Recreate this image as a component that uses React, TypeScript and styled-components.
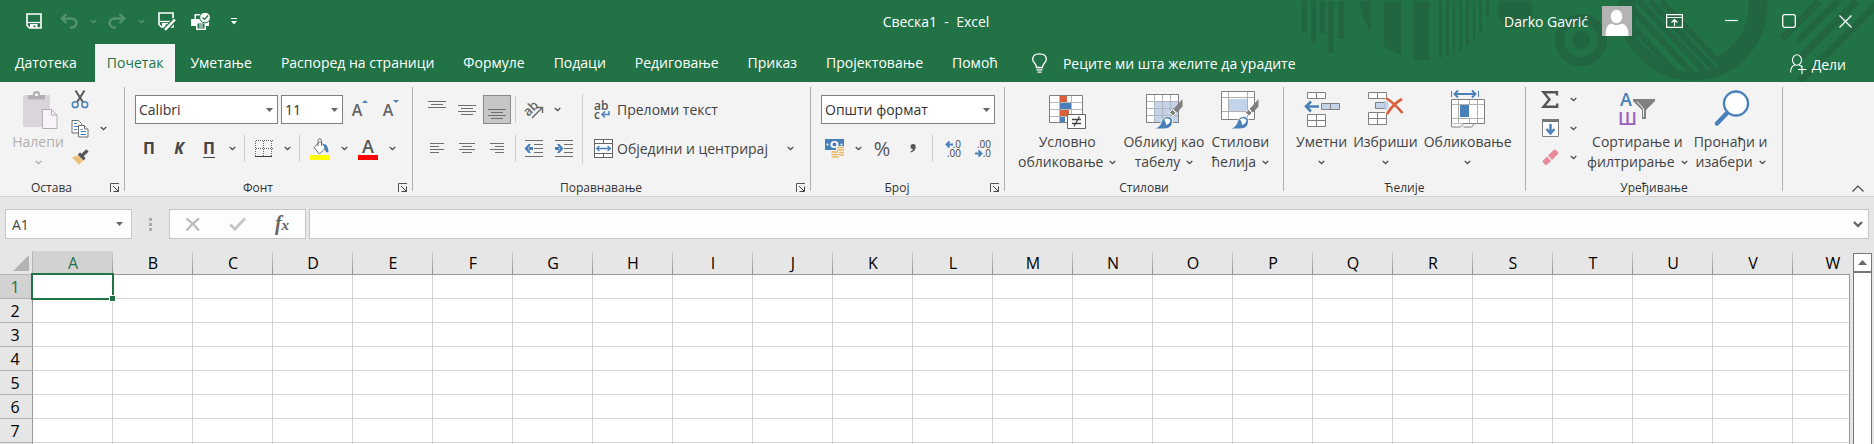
import React from 'react';
import styled, { createGlobalStyle, css } from 'styled-components';

const green = '#217346';
const line = '#6e6e6e';
const ink = '#444444';
const blue = '#4a80ba';
const paleBlue = '#c3d4ea';

const GlobalStyle = createGlobalStyle`
  *, *::before, *::after { box-sizing: border-box; }
  html, body, #root { height: 100%; }
  body {
    margin: 0;
    overflow: hidden;
    background: #e6e6e6;
    font-family: "Open Sans", "Noto Sans", sans-serif;
    font-size: 14px;
    color: ${ink};
  }
  svg { display: block; flex: none; overflow: visible; }
`;

/* ---------- shell ---------- */

const Window = styled.div`
  display: flex;
  flex-direction: column;
  height: 100%;
  overflow: hidden;
`;

const buttonReset = css`
  margin: 0;
  padding: 0;
  border: 0;
  background: none;
  font: inherit;
  color: inherit;
`;

const Header = styled.header`
  position: relative;
  flex: none;
  background: ${green};
  color: #fff;
`;

const HeaderArt = styled.svg`
  position: absolute;
  top: 0;
  right: 0;
  overflow: hidden;
`;

const TitleBar = styled.div`
  position: relative;
  display: grid;
  grid-template-columns: 1fr auto 1fr;
  align-items: center;
  height: 44px;
  padding-bottom: 2px;
`;

const QuickAccess = styled.div`
  display: flex;
  align-items: center;
  padding-left: 20px;
`;

const QuickButton = styled.button<{ $width: number }>`
  ${buttonReset}
  display: grid;
  place-items: center;
  width: ${(p) => p.$width}px;
  height: 28px;
  &:disabled { opacity: 0.22; color: #fff; }
`;

const Title = styled.h1`
  margin: 0;
  padding: 2px 2px 0 0;
  font-size: 14px;
  font-weight: 400;
  line-height: 20px;
  white-space: pre;
`;

const WindowArea = styled.div`
  display: flex;
  align-items: center;
  justify-content: flex-end;
`;

const Account = styled.button`
  ${buttonReset}
  display: flex;
  align-items: center;
  gap: 14px;
  margin-right: 14px;
  white-space: nowrap;
`;

const WindowButton = styled.button`
  ${buttonReset}
  display: grid;
  place-items: center;
  width: 57px;
  height: 32px;
`;

const TabBar = styled.nav`
  position: relative;
  display: flex;
  align-items: stretch;
  gap: 1px;
  height: 38px;
`;

const Tab = styled.button<{ $active?: boolean; $file?: boolean }>`
  ${buttonReset}
  padding: ${(p) => (p.$file ? '0 17px 0 15px' : p.$active ? '0 12px' : '0 14px')};
  line-height: 38px;
  white-space: nowrap;
  ${(p) => p.$active && css`background: #f3f3f3; color: ${green};`}
`;

const TellMe = styled.button`
  ${buttonReset}
  display: flex;
  align-items: center;
  gap: 16px;
  padding-left: 19px;
  white-space: nowrap;
`;

const Share = styled.button`
  ${buttonReset}
  display: flex;
  align-items: center;
  gap: 5px;
  margin-left: auto;
  padding: 2px 28px 0 0;
`;

/* ---------- ribbon ---------- */

const Ribbon = styled.section`
  display: flex;
  flex: none;
  align-items: flex-start;
  padding-top: 5px;
  background: #f3f3f3;
  border-bottom: 1px solid #d2d2d2;
`;

const RibbonGroup = styled.section<{ $width: number }>`
  display: flex;
  flex: none;
  flex-direction: column;
  width: ${(p) => p.$width}px;
  height: 109px;
`;

const GroupDivider = styled.div`
  flex: none;
  width: 1px;
  height: 104px;
  background: #b1b1b1;
`;

const GroupBody = styled.div<{ $pad?: number }>`
  display: flex;
  flex: 1;
  align-items: flex-start;
  padding: 0 ${(p) => p.$pad ?? 10}px;
`;

const GroupFooter = styled.footer`
  display: flex;
  align-items: center;
  height: 17px;
  color: #333;
`;

const GroupName = styled.h2`
  flex: 1;
  margin: 0;
  font-size: 12px;
  font-weight: 400;
  line-height: 16px;
  text-align: center;
`;

const Launcher = styled.button`
  ${buttonReset}
  width: 17px;
  margin-right: 4px;
  padding-left: 7px;
`;

const Stack = styled.div<{ $grow?: boolean }>`
  display: flex;
  flex-direction: column;
  flex: ${(p) => (p.$grow ? 1 : 'none')};
  gap: 10px;
  padding-top: 8px;
`;

const Row = styled.div`
  display: flex;
  align-items: center;
  gap: 2px;
  height: 29px;
`;

const SmallStack = styled.div`
  display: flex;
  flex-direction: column;
  gap: 5px;
`;

const SmallRow = styled.div`
  display: flex;
  gap: 2px;
  height: 24px;
`;

const IconButton = styled.button<{ $pressed?: boolean; $wide?: boolean }>`
  ${buttonReset}
  display: grid;
  place-items: center;
  width: ${(p) => (p.$wide ? 30 : 28)}px;
  height: 100%;
  ${(p) => p.$pressed && css`background: #c6c6c6; border: 1px solid #8a8a8a;`}
`;

const ArrowButton = styled.button`
  ${buttonReset}
  display: grid;
  place-items: center;
  width: 14px;
  height: 100%;
`;

const Letter = styled.span<{ $italic?: boolean; $underline?: boolean }>`
  font-size: 16px;
  font-weight: 700;
  line-height: 18px;
  font-style: ${(p) => (p.$italic ? 'italic' : 'normal')};
  border-bottom: 1px solid ${(p) => (p.$underline ? ink : 'transparent')};
`;

const ResizeLetter = styled.span`
  display: flex;
  align-items: flex-start;
  font-size: 16px;
  font-weight: 600;
  line-height: 20px;
  color: #666;
`;

const Percent = styled.span`
  font-size: 20px;
  line-height: 24px;
  color: #555;
`;

const ColorLetter = styled.span`
  width: 20px;
  border-bottom: 5px solid #ff0000;
  font-size: 18px;
  font-weight: 600;
  line-height: 17px;
  text-align: center;
  color: #555;
`;

const Decimal = styled.span`
  display: grid;
  justify-items: end;
  width: 18px;
  font-size: 10px;
  line-height: 9px;
`;

const DecimalLine = styled.span`
  display: flex;
  align-items: center;
`;

const RowDivider = styled.div<{ $space?: number }>`
  width: 1px;
  height: 27px;
  margin: 0 ${(p) => p.$space ?? 3}px;
  background: #cfcfcf;
`;

const TallDivider = styled.div`
  width: 1px;
  height: 70px;
  margin: 7px 6px 0 4px;
  background: #cfcfcf;
`;

const TextButton = styled.button`
  ${buttonReset}
  display: flex;
  align-items: center;
  height: 100%;
  white-space: nowrap;
`;

const IconSlot = styled.span`
  display: grid;
  place-items: center;
  width: 28px;
`;

const Push = styled.div`
  margin: 0 3px 0 auto;
`;

const SelectBox = styled.div<{ $width: number }>`
  display: grid;
  width: ${(p) => p.$width}px;
  height: 29px;
  & > * { grid-area: 1 / 1; }
  & > svg { place-self: center end; margin-right: 5px; pointer-events: none; }
  & + & { margin-left: 1px; }
`;

const Select = styled.select`
  width: 100%;
  height: 100%;
  padding: 0 16px 1px 3px;
  appearance: none;
  border: 1px solid #808080;
  border-radius: 0;
  background: #fff;
  font: inherit;
  color: #333;
`;

const LargeRow = styled.div<{ $gap: number }>`
  display: flex;
  align-items: flex-start;
  gap: ${(p) => p.$gap}px;
  padding-top: 3px;
`;

const LargeButton = styled.button<{ $width?: number }>`
  ${buttonReset}
  display: flex;
  flex-direction: column;
  align-items: center;
  width: ${(p) => (p.$width ? p.$width + 'px' : 'auto')};
  line-height: 20px;
  white-space: nowrap;
  & > svg { margin-bottom: 2px; }
  &:disabled { color: #b1b1b1; }
`;

const LargeLine = styled.span`
  display: flex;
  align-items: center;
  gap: 6px;
  height: 20px;
`;

const Collapse = styled.button`
  ${buttonReset}
  align-self: flex-end;
  margin-left: auto;
  padding: 4px 10px 4px 4px;
`;

/* ---------- formula bar ---------- */

const FormulaBar = styled.div`
  display: flex;
  flex: none;
  align-items: center;
  padding: 12px 5px;
`;

const NameBox = styled.div`
  display: flex;
  align-items: center;
  width: 127px;
  height: 30px;
  padding-right: 8px;
  background: #fdfdfd;
  border: 1px solid #c6c6c6;
`;

const NameInput = styled.input`
  flex: 1;
  min-width: 0;
  padding: 0 6px;
  border: 0;
  background: none;
  font: inherit;
  color: ${ink};
`;

const Grip = styled.div`
  display: grid;
  gap: 2px;
  margin: 0 17px;
  span { width: 3px; height: 3px; background: #ababab; }
`;

const EditButtons = styled.div`
  display: flex;
  align-items: center;
  justify-content: space-between;
  width: 137px;
  height: 30px;
  margin-right: 3px;
  padding: 0 14px;
  background: #fdfdfd;
  border: 1px solid #c6c6c6;
`;

const EditButton = styled.button`
  ${buttonReset}
  display: grid;
  place-items: center;
  width: 18px;
  height: 100%;
`;

const FxText = styled.span`
  font: italic 700 20px/22px "Liberation Serif", serif;
  color: #666;
  small { font-size: 15px; }
`;

const FormulaBox = styled.div`
  display: flex;
  flex: 1;
  align-items: center;
  height: 30px;
  padding-right: 5px;
  background: #fdfdfd;
  border: 1px solid #c6c6c6;
`;

/* ---------- sheet ---------- */

const SheetArea = styled.main`
  display: flex;
  flex: 1;
  min-height: 0;
`;

const Viewport = styled.div`
  flex: 1;
  min-width: 0;
  overflow: hidden;
`;

const Grid = styled.table`
  width: 1873px;
  table-layout: fixed;
  border-collapse: separate;
  border-spacing: 0;
`;

const Corner = styled.th`
  width: 33px;
  height: 24px;
  padding: 0;
  border-right: 1px solid #b5b5b5;
  border-bottom: 1px solid #b5b5b5;
  svg { margin-left: 13px; }
`;

const ColumnHead = styled.th<{ $selected: boolean }>`
  width: 80px;
  height: 24px;
  padding: 0;
  border-bottom: 1px solid #999;
  background: linear-gradient(#d0d0d0, #8f8f8f) right / 1px 100% no-repeat
    ${(p) => (p.$selected ? '#d2d2d2' : '#e6e6e6')};
  font-size: 16px;
  font-weight: 400;
  line-height: 22px;
  color: ${(p) => (p.$selected ? green : '#000')};
`;

const RowHead = styled.th<{ $selected: boolean }>`
  height: 24px;
  padding: 0 2px 0 0;
  border-right: 1px solid #999;
  border-bottom: 1px solid #b0b0b0;
  background: ${(p) => (p.$selected ? '#d2d2d2' : '#e6e6e6')};
  font-size: 16px;
  font-weight: 400;
  line-height: 22px;
  color: ${(p) => (p.$selected ? green : '#000')};
`;

const Cell = styled.td<{ $selected: boolean }>`
  padding: 0;
  background: #fff;
  border-right: 1px solid #d4d4d4;
  border-bottom: 1px solid #d4d4d4;
  ${(p) =>
    p.$selected &&
    css`
      position: relative;
      &::before {
        content: '';
        position: absolute;
        inset: -2px;
        border: 2px solid ${green};
      }
      &::after {
        content: '';
        position: absolute;
        right: -4px;
        bottom: -4px;
        width: 7px;
        height: 7px;
        background: ${green};
        border: 1px solid #fff;
      }
    `}
`;

const Gutter = styled.div`
  width: 4px;
  margin-top: 23px;
  border-left: 1px solid #999;
`;

const ScrollBar = styled.div`
  display: flex;
  flex-direction: column;
  width: 19px;
  margin: 2px 2px 0 0;
`;

const ScrollButton = styled.button`
  ${buttonReset}
  display: grid;
  place-items: center;
  height: 19px;
  background: #fff;
  border: 1px solid #777;
`;

const ScrollThumb = styled.div`
  flex: 1;
  background: #fff;
  border: 1px solid #777;
  border-bottom: 0;
`;

/* ---------- drawings ---------- */

const Chevron = ({ color = '#555' }: { color?: string }) => (
  <svg width="7" height="5" fill="none" stroke={color} strokeWidth="1.3"><path d="M.7 1l2.8 2.6L6.3 1" /></svg>
);

const Caret = () => <svg width="7" height="4"><path d="M0 0h7L3.5 4z" fill="#666" /></svg>;

const SaveShape = () => (
  <>
    <path d="M1 1h14v14H3.5L1 12.500z" fill="none" stroke="#fff" strokeWidth="1.6" />
    <path d="M1.500 9.500h13" stroke="#fff" strokeWidth="1.300" />
    <path d="M4 15v-4h7.500v4H9.500v-2.400H7.500V15z" fill="#fff" />
  </>
);

const Undo = ({ flip }: { flip?: boolean }) => (
  <svg width="18" height="16" fill="none" stroke="currentColor" strokeWidth="2.4">
    <g transform={flip ? 'matrix(-1 0 0 1 18 0)' : undefined}>
      <path d="M6.500 1L1.800 5.500l4.700 4.500M2.500 5.500H11c7.500 0 7.500 9.300-1 9.300" />
    </g>
  </svg>
);

const HLines = ({ rows, height = 18 }: { rows: number[][]; height?: number }) => (
  <svg width="18" height={height} fill="none" stroke={line} shapeRendering="crispEdges">
    <path d={rows.map(([x, y, w]) => `M${x} ${y + 0.5}h${w}`).join('')} />
  </svg>
);

const Scissors = () => (
  <svg width="18" height="19" fill="none">
    <path d="M4.500.500L12.500 13M13.500.500L5.500 13" stroke="#595959" strokeWidth="2" />
    <circle cx="4.200" cy="14.700" r="2.900" stroke={blue} strokeWidth="1.500" fill="#f3f3f3" />
    <circle cx="13.800" cy="14.700" r="2.900" stroke={blue} strokeWidth="1.500" fill="#f3f3f3" />
  </svg>
);

const Copy = () => (
  <svg width="18" height="19" fill="#fff" stroke={line}>
    <path d="M1 1.500h6.500l3 3V14H1z" />
    <path d="M7.500 6.500h6l3.500 3.500v8H7.500z" />
    <path d="M13.500 6.500V10H17" />
    <path d="M3 4.500h3M3 7.500h4M3 10.500h3M9.500 10.500h2M9.500 12.500h5.500M9.500 15.500h5.500" stroke={blue} />
  </svg>
);

const FormatPainter = () => (
  <svg width="18" height="16">
    <path d="M1 8.500l6-2 5 5-4 4.300z" fill="#edc078" />
    <path d="M6.800 5.800l2.300-2.200 5.600 5.600-2.200 2.300z" fill="#555" />
    <path d="M11 6.500l5.500-5" stroke="#555" strokeWidth="3.200" />
  </svg>
);

const PasteIcon = () => (
  <svg width="40" height="40" fill="none">
    <rect x="5" y="5" width="27" height="32" rx="1.500" fill="#d9d5da" />
    <path d="M10 9.500V5h5V3.500Q15 1 18.500 1T22 3.500V5h5v4.500z" fill="#b1b1b1" />
    <rect x="17" y="3.500" width="3" height="2.500" fill="#f3f3f3" />
    <path d="M24.500 19.500h9l5.500 5.500v13.500H24.500z" fill="#f7f3f9" stroke="#b1b1b1" />
    <path d="M33.500 19.500V25H39" stroke="#b1b1b1" />
  </svg>
);

const BorderIcon = () => (
  <svg width="18" height="18" stroke="#666" shapeRendering="crispEdges" fill="none">
    <path d="M.5 .5h17M.5 8.500h17M.5 .5v16M8.500 .5v16M16.500 .5v16" strokeDasharray="1 1" />
    <path d="M0 16.500h17" stroke="#444" />
  </svg>
);

const Bucket = () => (
  <svg width="20" height="22">
    <path d="M4 9.500l6-6 6 6-6.500 6.500z" fill="#fff" stroke={line} />
    <path d="M8 8V2.500Q8 .8 9.700.8T11.500 2.500V8" fill="none" stroke={line} />
    <path d="M13 6q5-1 5.500 8-2.500 1.500-3.500-2z" fill={blue} />
    <rect y="17" width="20" height="5" fill="#ffff00" />
  </svg>
);

const Orientation = () => (
  <svg width="20" height="20">
    <text x="0" y="13" transform="rotate(-45 7 10)" fontSize="13" fontWeight="600" fill="#666">ab</text>
    <path d="M8 18L18 8M13 7.500h5.500V13" fill="none" stroke="#666" strokeWidth="1.400" />
  </svg>
);

const WrapGlyph = styled.span`
  display: grid;
  width: 18px;
  font-size: 12px;
  font-weight: 600;
  line-height: 9px;
  color: #555;
`;

const WrapLine = styled.span`
  display: flex;
  align-items: center;
  gap: 1px;
`;

const WrapIcon = () => (
  <WrapGlyph>
    <WrapLine>ab</WrapLine>
    <WrapLine>
      c<svg width="9" height="7" fill="none" stroke={blue} strokeWidth="1.500"><path d="M8 0v3.500H1.500M4 .5l-3 3 3 3" /></svg>
    </WrapLine>
  </WrapGlyph>
);

const Indent = ({ out }: { out?: boolean }) => (
  <svg width="18" height="17">
    <path d="M0 .5h18M9 4.500h9M9 8.500h9M9 12.500h9M0 16.500h18" stroke={line} shapeRendering="crispEdges" />
    <g transform={out ? 'matrix(-1 0 0 1 8 0)' : undefined} fill={blue}>
      <path d="M0 7h4v3H0zM2 4h2.500L8.500 8.500 4.500 13H2l3-4.500z" />
    </g>
  </svg>
);

const MergeIcon = () => (
  <svg width="19" height="19" fill="#fff" stroke="#666" shapeRendering="crispEdges">
    <path d="M.5 .5h18v18H.5zM.5 4.500h18M.5 14.500h18M9.500 .5v4M9.500 14.500v4" />
    <path d="M3 9.500h13M5.500 7l-3 2.500 3 2.500M13.500 7l3 2.500-3 2.500" fill="none" stroke={blue} strokeWidth="1.300" shapeRendering="auto" />
  </svg>
);

const Money = () => (
  <svg width="20" height="19">
    <rect width="19" height="11" fill={blue} />
    <ellipse cx="9.500" cy="5.500" rx="4" ry="3.500" fill="#fff" />
    <circle cx="2.500" cy="5.500" r="1" fill="#fff" /><circle cx="16.500" cy="5.500" r="1" fill="#fff" />
    <circle cx="9.500" cy="5.500" r="2" fill={blue} />
    <path d="M11 7h8.500v11H15v1H6v-7h5z" fill="#f3f3f3" />
    <path d="M12 8.500h7M12 11h7M14 13.500h5M14 16h5M6.500 13h6.500M6.500 15.500h7M6.500 18h7" stroke="#e9b963" strokeWidth="1.700" />
  </svg>
);

const Comma = () => (
  <svg width="8" height="11"><path d="M4 1a2.700 2.700 0 0 1 2.700 3Q6.500 8 2 9.500L1.500 8.500Q4 7.200 4 6A2.500 2.500 0 1 1 4 1z" fill="#555" /></svg>
);

const TinyArrow = ({ left }: { left?: boolean }) => (
  <svg width="8" height="7" fill="none" stroke={blue} strokeWidth="1.800">
    <path d={left ? 'M8 3.500H1.500M4.500 .5l-3 3 3 3' : 'M0 3.500h6.500M3.500 .5l3 3-3 3'} />
  </svg>
);

const Brush = () => (
  <g>
    <path d="M38.500 9v7.500L33 22.500l-3.500-3.500z" fill="#808080" />
    <path d="M28.500 19.500l3.500 3.500-3 3-3.500-3.500z" fill="#808080" stroke="#f3f3f3" />
    <path d="M10 39q6-2 7.500-7.500 1.500-5 6-5 5.500 0 5 5.500-.5 7-8.500 7z" fill={blue} stroke="#f3f3f3" />
    <path d="M20 29.500q3.500-2.500 6.500.5-.5 4-4.500 5 0-3.500-2-5.500z" fill="#fff" />
  </g>
);

const ConditionalIcon = () => (
  <svg width="40" height="40">
    <path d="M2.500 5.500h33v27h-33z" fill="#fff" stroke="#808080" />
    <path d="M13 6h7v6h-7z" fill="#d9603b" /><path d="M13 13h11v6H13z" fill={blue} />
    <path d="M13 20h9v6h-9z" fill="#d9603b" /><path d="M13 27h5v5h-5z" fill={blue} />
    <path d="M3 12.500h32M3 19.500h32M3 26.500h32M12.500 6v26M24.500 6v26" stroke="#b8b8b8" />
    <path d="M20.500 24.500h18v14h-18z" fill="#fff" stroke="#666" />
    <path d="M25 29.500h9M25 33.500h9M32.500 26.500l-5.500 10" stroke="#444" strokeWidth="1.300" />
  </svg>
);

const TableStyleIcon = () => (
  <svg width="40" height="40">
    <path d="M2.500 4.500h32v28h-32z" fill="#fff" stroke="#808080" />
    <path d="M11 12h23v20H11z" fill={paleBlue} />
    <path d="M3 11.500h31M3 18.500h31M3 25.500h31M10.500 5v27M18.500 5v27M26.500 5v27" stroke="#b0b5bd" />
    <Brush />
  </svg>
);

const CellStyleIcon = () => (
  <svg width="40" height="40">
    <path d="M1.500 1.500h33v28h-33z" fill="#fff" stroke="#808080" />
    <path d="M2 7.500h32M2 21.500h32M8.500 2v27M27.500 2v27" stroke="#b0b0b0" />
    <path d="M9 9h18v12H9z" fill={paleBlue} />
    <Brush />
  </svg>
);

const BlockPair = ({ x, y, rows = 1 }: { x: number; y: number; rows?: number }) => (
  <path
    d={`M${x}.5 ${y}.5h18v${rows * 6}h-18zM${x + 9}.5 ${y}.5v${rows * 6}${rows > 1 ? `M${x}.5 ${y + 6}.5h18` : ''}`}
    fill="#fff" stroke="#808080"
  />
);

const InsertIcon = () => (
  <svg width="38" height="40">
    <BlockPair x={4} y={2} /><BlockPair x={4} y={24} rows={2} />
    <path d="M18.500 13.500h18v6h-18zM27.500 13.500v6" fill={paleBlue} stroke="#808080" />
    <path d="M16 16.500H3M8 11.500l-5 5 5 5" fill="none" stroke={blue} strokeWidth="2.500" />
  </svg>
);

const DeleteIcon = () => (
  <svg width="38" height="40">
    <BlockPair x={2} y={2} /><BlockPair x={2} y={22} rows={2} />
    <path d="M9.500 12.500h9.500v6H9.500z" fill={paleBlue} stroke="#808080" />
    <path d="M18.500 11h4v9h-4z" fill={paleBlue} />
    <path d="M20 8q8 5 16.500 15M36 9Q27 14 21 24" fill="none" stroke="#f3f3f3" strokeWidth="5" />
    <path d="M20 8q8 5 16.500 15M36 9Q27 14 21 24" fill="none" stroke="#d9603b" strokeWidth="2.600" />
  </svg>
);

const FormatIcon = () => (
  <svg width="38" height="40">
    <path d="M2.500 1v6M29.500 1v6" stroke={blue} />
    <path d="M5 4h22M9 .5L5.500 4 9 7.500M23 .5L26.500 4 23 7.500" fill="none" stroke={blue} strokeWidth="1.800" />
    <path d="M2.500 9.500h33v24h-33z" fill="#fff" stroke="#808080" />
    <path d="M3 14.500h32M3 28.500h32M9.500 10v23M20.500 10v5M20.500 28v5M28.500 10v23" stroke="#b0b0b0" />
    <path d="M11 15h9v12h-9z" fill={blue} />
    <path d="M2.500 33.500v3.500h9l3-3.500M14.500 37h8l3-3.500" fill="#fff" stroke="#808080" />
  </svg>
);

const Sigma = () => (
  <svg width="16" height="17"><path d="M15 4.500V1.200H1.500l6 7.300-6 7.300H15.200V12.500" fill="none" stroke="#555" strokeWidth="2.400" /></svg>
);

const FillIcon = () => (
  <svg width="17" height="18">
    <path d="M.5 1.500h16v16H.5z" fill="#fff" stroke="#808080" /><path d="M0 0h17v3H0z" fill="#777" />
    <path d="M8.500 5v9M4.500 10l4 4.500 4-4.500" fill="none" stroke={blue} strokeWidth="2.400" />
  </svg>
);

const Eraser = () => (
  <svg width="17" height="17">
    <path d="M6 6.500L12 .7Q13 0 14 1l2 2.200Q16.800 4 16 5l-6 6z" fill="#e98a9c" />
    <path d="M5 7.500L9 12l-3.800 3.500Q4 16.500 3 15.500L1 13.300Q.3 12.300 1.200 11.300z" fill="#e98a9c" />
  </svg>
);

const SortIcon = () => (
  <svg width="40" height="40">
    <text x="3" y="16" fontSize="18" fontWeight="600" fill={blue}>А</text>
    <text x="1" y="35" fontSize="18" fontWeight="600" fill="#9a62bf">Ш</text>
    <path d="M16 9h22v2l-9 9v9h-4v-9l-9-9z" fill="#808080" />
    <path d="M20 11.500l5 5.500 1.500 2v8" fill="none" stroke="#f3f3f3" />
  </svg>
);

const FindIcon = () => (
  <svg width="40" height="40">
    <path d="M6 33.500L17 22" stroke={blue} strokeWidth="4.500" strokeLinecap="round" />
    <circle cx="25" cy="13.500" r="12" fill="#fff" stroke={blue} strokeWidth="2.400" />
  </svg>
);

const LauncherIcon = () => (
  <svg width="10" height="9" fill="none" stroke="#555">
    <path d="M.5 9V.5H9" /><path d="M3 3l5 5M8.500 3.500v5h-5" stroke="#444" />
  </svg>
);

const Artwork = () => (
  <HeaderArt width="584" height="82" fill="#226541" aria-hidden="true">
    <path d="M12 1h5v32h-5zM21 1h5v42h-5zM30 1h5v32h-5zM38 1h6v52h-6zM48 1h6v38h-6z" />
    <path d="M70 1h11v31Q71 18 70 1zM94 1h17v54q-9-3-17-9zM123 1h16v59h-16z" />
    <path d="M149 1h3v57h-3zM156 1h3v55h-3zM163 1h2v53h-2zM169 1h3v50h-3zM176 1h3v45h-3zM183 1h2v39h-2zM189 1h3v32h-3zM196 1h3v16h-3z" />
    <path d="M210 1h31q3 8 1 13-4 15-17 15t-17-15q-1-6 2-13z" />
    <circle cx="291" cy="40" r="21.500" fill="none" stroke="#226541" strokeWidth="9" />
    <circle cx="291" cy="40" r="9" />
    <clipPath id="inside"><path d="M345 1h120v71H345z" /></clipPath>
    <clipPath id="bowl"><circle cx="403" cy="6" r="66" /></clipPath>
    <circle cx="403" cy="6" r="65" fill="none" stroke="#226541" strokeWidth="19" />
    <g clipPath="url(#bowl)">
      <path clipPath="url(#inside)" d="M346 1h30l62 66-20 10-40-8-32-30z" fill={green} />
      <g stroke="#226541" strokeWidth="6">
        <path d="M325 8l75 80M336 2l80 86M349 1l82 88M360 1l77 82M371 1l72 76" />
      </g>
    </g>
    <g stroke="#226541" strokeWidth="7">
      <path d="M529 1l-37 38M548 1l-40 40M567 1l-56 56M590 1l-80 80" />
    </g>
  </HeaderArt>
);

/* ---------- composed parts ---------- */

const Menu = ({ label }: { label: string }) => <ArrowButton aria-label={label}><Chevron /></ArrowButton>;

function Group({ name, width, launcher, pad, children }: {
  name: string; width: number; launcher?: boolean; pad?: number; children: React.ReactNode;
}) {
  return (
    <>
      <RibbonGroup $width={width}>
        <GroupBody $pad={pad}>{children}</GroupBody>
        <GroupFooter>
          <GroupName>{name}</GroupName>
          {launcher && <Launcher aria-label={name + ': подешавања'}><LauncherIcon /></Launcher>}
        </GroupFooter>
      </RibbonGroup>
      <GroupDivider />
    </>
  );
}

function Large({ icon, top, bottom }: { icon: React.ReactNode; top: string; bottom?: string }) {
  return (
    <LargeButton>
      {icon}
      <LargeLine>{top}</LargeLine>
      <LargeLine>{bottom}<Chevron /></LargeLine>
    </LargeButton>
  );
}

function Choice({ label, value, width }: { label: string; value: string; width: number }) {
  return (
    <SelectBox $width={width}>
      <Select aria-label={label} defaultValue={value}><option>{value}</option></Select>
      <Caret />
    </SelectBox>
  );
}

const tabs = ['Уметање', 'Распоред на страници', 'Формуле', 'Подаци', 'Редиговање', 'Приказ', 'Пројектовање', 'Помоћ'];
const columns = 'ABCDEFGHIJKLMNOPQRSTUVW'.split('');
const rows = [1, 2, 3, 4, 5, 6, 7, 8];

export default function App() {
  return (
    <Window>
      <GlobalStyle />
      <Header>
        <Artwork />
        <TitleBar>
          <QuickAccess>
            <QuickButton $width={28} aria-label="Сачувај"><svg width="16" height="16"><SaveShape /></svg></QuickButton>
            <QuickButton $width={42} disabled aria-label="Опозови"><Undo /></QuickButton>
            <QuickButton $width={6} disabled aria-label="Опозови: листа"><Chevron color="#fff" /></QuickButton>
            <QuickButton $width={42} disabled aria-label="Понови"><Undo flip /></QuickButton>
            <QuickButton $width={6} disabled aria-label="Понови: листа"><Chevron color="#fff" /></QuickButton>
            <QuickButton $width={46} aria-label="Сачувај као">
              <svg width="18" height="18">
                <SaveShape />
                <path d="M7.500 17.500L17 7.500" stroke={green} strokeWidth="5" />
                <path d="M7 17.800L17 7.500" stroke="#fff" strokeWidth="2.400" />
              </svg>
            </QuickButton>
            <QuickButton $width={22} aria-label="Преглед и штампање">
              <svg width="20" height="19">
                <path d="M0 7h3.500V2h7v5H18v7h-3v4H5v-4H0z" fill="#fff" />
                <path d="M5 3.500h5V7H5zM6.500 11.500h7v5h-7z" fill={green} />
                <path d="M8 13h4M8 15h4" stroke="#fff" />
                <circle cx="14" cy="5.500" r="5.300" fill="#fff" stroke={green} />
                <path d="M11.500 5.500l2 2 3.500-4" fill="none" stroke={green} strokeWidth="1.300" />
              </svg>
            </QuickButton>
            <QuickButton $width={44} aria-label="Прилагоди траку">
              <svg width="6" height="7" fill="#fff"><path d="M0 0h6v1H0zM0 3h6L3 6.500z" /></svg>
            </QuickButton>
          </QuickAccess>
          <Title>{'Свеска1  -  Excel'}</Title>
          <WindowArea>
            <Account>
              Darko Gavrić
              <svg width="30" height="30">
                <path d="M0 0h30v30H0z" fill="#b3b3b3" />
                <ellipse cx="14.500" cy="10.500" rx="5.800" ry="6.800" fill="#fff" />
                <path d="M3.500 30q0-12 6-12.500 5 3 10 0 7 .5 7 12.500z" fill="#fff" />
              </svg>
            </Account>
            <WindowButton aria-label="Опције приказа траке">
              <svg width="17" height="14" fill="none" stroke="#fff" strokeWidth="1.200">
                <path d="M.6.6h15.800v12.800H.6zM.6 3.500h15.800M8.500 12V6M5.500 8.500l3-3 3 3" />
              </svg>
            </WindowButton>
            <WindowButton aria-label="Умањи"><svg width="13" height="5"><path d="M0 1.500h13" stroke="#fff" strokeWidth="1.200" /></svg></WindowButton>
            <WindowButton aria-label="Увећај">
              <svg width="14" height="14"><rect x=".7" y=".7" width="12.600" height="12.600" rx="2" fill="none" stroke="#fff" strokeWidth="1.300" /></svg>
            </WindowButton>
            <WindowButton aria-label="Затвори"><svg width="13" height="13"><path d="M.5.5l12 12M12.500.5l-12 12" stroke="#fff" strokeWidth="1.300" /></svg></WindowButton>
          </WindowArea>
        </TitleBar>
        <TabBar>
          <Tab $file>Датотека</Tab>
          <Tab $active>Почетак</Tab>
          {tabs.map((t) => <Tab key={t}>{t}</Tab>)}
          <TellMe>
            <svg width="15" height="20" fill="none" stroke="#fff" strokeWidth="1.300">
              <path d="M4.500 14.500Q4.500 12 2.500 10 .7 8 .7 6.500.7.8 7.500.8t6.800 5.700q0 1.500-1.800 3.500-2 2-2 4.500zM4.500 16.800h6M5.500 19.200h4" />
            </svg>
            Реците ми шта желите да урадите
          </TellMe>
          <Share>
            <svg width="17" height="20" fill="none" stroke="#fff" strokeWidth="1.100">
              <ellipse cx="7" cy="6" rx="4.500" ry="5.200" /><path d="M.6 18.500Q.6 12 5 11M9 11q2 .6 3 2.500M8 15.500h8.500M12 11.500v8.500" />
            </svg>
            Дели
          </Share>
        </TabBar>
      </Header>

      <Ribbon>
        <Group name="Остава" width={124} launcher>
          <LargeRow $gap={0}>
            <LargeButton $width={56} disabled>
              <PasteIcon />
              <LargeLine>Налепи</LargeLine>
              <LargeLine><Chevron color="#b1b1b1" /></LargeLine>
            </LargeButton>
          </LargeRow>
          <SmallStack>
            <SmallRow><IconButton aria-label="Исеци"><Scissors /></IconButton></SmallRow>
            <SmallRow><IconButton aria-label="Копирај"><Copy /></IconButton><Menu label="Копирај: опције" /></SmallRow>
            <SmallRow><IconButton aria-label="Преносилац обликовања"><FormatPainter /></IconButton></SmallRow>
          </SmallStack>
        </Group>

        <Group name="Фонт" width={287} launcher>
          <Stack>
            <Row>
              <Choice label="Фонт" value="Calibri" width={143} />
              <Choice label="Величина фонта" value="11" width={62} />
              <IconButton $wide aria-label="Повећај фонт"><ResizeLetter>A<svg width="6" height="3"><path d="M0 3h6L3 0z" fill={blue} /></svg></ResizeLetter></IconButton>
              <IconButton aria-label="Смањи фонт"><ResizeLetter>A<svg width="6" height="3"><path d="M0 0h6L3 3z" fill={blue} /></svg></ResizeLetter></IconButton>
            </Row>
            <Row>
              <IconButton aria-label="Подебљано"><Letter>П</Letter></IconButton>
              <IconButton aria-label="Курзив"><Letter $italic>К</Letter></IconButton>
              <IconButton aria-label="Подвучено"><Letter $underline>П</Letter></IconButton>
              <Menu label="Подвучено: опције" />
              <RowDivider />
              <IconButton aria-label="Ивице"><BorderIcon /></IconButton>
              <Menu label="Ивице: опције" />
              <RowDivider />
              <IconButton $wide aria-label="Боја попуне"><Bucket /></IconButton>
              <Menu label="Боја попуне: опције" />
              <IconButton $wide aria-label="Боја фонта"><ColorLetter>A</ColorLetter></IconButton>
              <Menu label="Боја фонта: опције" />
            </Row>
          </Stack>
        </Group>

        <Group name="Поравнавање" width={397} launcher>
          <Stack>
            <Row>
              <IconButton aria-label="Поравнај по врху"><HLines rows={[[0, 0, 18], [3, 3, 12], [0, 6, 18]]} /></IconButton>
              <IconButton aria-label="Поравнај по средини"><HLines rows={[[0, 4, 18], [3, 7, 12], [0, 10, 18], [3, 13, 12]]} /></IconButton>
              <IconButton $pressed aria-label="Поравнај по дну"><HLines rows={[[0, 8, 18], [3, 11, 12], [0, 14, 18], [3, 17, 12]]} /></IconButton>
              <RowDivider $space={2} />
              <IconButton aria-label="Положај текста"><Orientation /></IconButton>
              <Menu label="Положај текста: опције" />
            </Row>
            <Row>
              <IconButton aria-label="Поравнај лево"><HLines height={11} rows={[[2, 0, 14], [2, 3, 9], [2, 6, 14], [2, 9, 9]]} /></IconButton>
              <IconButton aria-label="Центрирај"><HLines height={11} rows={[[1, 0, 16], [4, 3, 10], [1, 6, 16], [4, 9, 10]]} /></IconButton>
              <IconButton aria-label="Поравнај десно"><HLines height={11} rows={[[2, 0, 14], [7, 3, 9], [2, 6, 14], [7, 9, 9]]} /></IconButton>
              <RowDivider $space={2} />
              <IconButton aria-label="Смањи увлачење"><Indent out /></IconButton>
              <IconButton aria-label="Повећај увлачење"><Indent /></IconButton>
            </Row>
          </Stack>
          <TallDivider />
          <Stack $grow>
            <Row><TextButton><IconSlot><WrapIcon /></IconSlot>Преломи текст</TextButton></Row>
            <Row>
              <TextButton><IconSlot><MergeIcon /></IconSlot>Обједини и центрирај</TextButton>
              <Push><Menu label="Обједини: опције" /></Push>
            </Row>
          </Stack>
        </Group>

        <Group name="Број" width={193} launcher>
          <Stack>
            <Row><Choice label="Формат броја" value="Општи формат" width={174} /></Row>
            <Row>
              <IconButton aria-label="Новчани формат"><Money /></IconButton>
              <Menu label="Новчани формат: опције" />
              <IconButton $wide aria-label="Проценат"><Percent>%</Percent></IconButton>
              <IconButton aria-label="Стил зареза"><Comma /></IconButton>
              <RowDivider />
              <IconButton aria-label="Повећај децимале">
                <Decimal><DecimalLine><TinyArrow left />.0</DecimalLine><DecimalLine>.00</DecimalLine></Decimal>
              </IconButton>
              <IconButton aria-label="Смањи децимале">
                <Decimal><DecimalLine>.00</DecimalLine><DecimalLine><TinyArrow />.0</DecimalLine></Decimal>
              </IconButton>
            </Row>
          </Stack>
        </Group>

        <Group name="Стилови" width={278} pad={13}>
          <LargeRow $gap={7}>
            <Large icon={<ConditionalIcon />} top="Условно" bottom="обликовање" />
            <Large icon={<TableStyleIcon />} top="Обликуј као" bottom="табелу" />
            <Large icon={<CellStyleIcon />} top="Стилови" bottom="ћелија" />
          </LargeRow>
        </Group>

        <Group name="Ћелије" width={241} pad={12}>
          <LargeRow $gap={6}>
            <Large icon={<InsertIcon />} top="Уметни" />
            <Large icon={<DeleteIcon />} top="Избриши" />
            <Large icon={<FormatIcon />} top="Обликовање" />
          </LargeRow>
        </Group>

        <Group name="Уређивање" width={256}>
          <SmallStack>
            <SmallRow><IconButton aria-label="Збир"><Sigma /></IconButton><Menu label="Збир: опције" /></SmallRow>
            <SmallRow><IconButton aria-label="Попуни"><FillIcon /></IconButton><Menu label="Попуни: опције" /></SmallRow>
            <SmallRow><IconButton aria-label="Обриши"><Eraser /></IconButton><Menu label="Обриши: опције" /></SmallRow>
          </SmallStack>
          <RowDivider as="span" $space={3} hidden />
          <EditingTools>
            <LargeRow $gap={6}>
              <Large icon={<SortIcon />} top="Сортирање и" bottom="филтрирање" />
              <Large icon={<FindIcon />} top="Пронађи и" bottom="изабери" />
            </LargeRow>
          </EditingTools>
        </Group>
        <Collapse aria-label="Скупи траку">
          <svg width="12" height="7" fill="none" stroke="#444" strokeWidth="1.200"><path d="M.5 6.500L6 1l5.500 5.500" /></svg>
        </Collapse>
      </Ribbon>

      <FormulaBar>
        <NameBox><NameInput aria-label="Поље за име" defaultValue="A1" /><Caret /></NameBox>
        <Grip><span /><span /><span /></Grip>
        <EditButtons>
          <EditButton aria-label="Откажи"><svg width="16" height="15"><path d="M1.500 1.500q7 5 12.500 12M14 1.500q-7 5-12.500 12" fill="none" stroke="#bdbdbd" strokeWidth="2.200" /></svg></EditButton>
          <EditButton aria-label="Унеси"><svg width="17" height="14"><path d="M1 7.500l5 4.500L16 1.500" fill="none" stroke="#c6c6c6" strokeWidth="2.800" /></svg></EditButton>
          <EditButton aria-label="Уметни функцију"><FxText>f<small>x</small></FxText></EditButton>
        </EditButtons>
        <FormulaBox>
          <NameInput aria-label="Трака формуле" />
          <svg width="10" height="7"><path d="M1 1l4 4 4-4" fill="none" stroke="#666" strokeWidth="2.400" /></svg>
        </FormulaBox>
      </FormulaBar>

      <SheetArea>
        <Viewport>
          <Grid>
            <thead>
              <tr>
                <Corner aria-label="Изабери све"><svg width="16" height="16"><path d="M16 0v16H0z" fill="#b4b4b4" /></svg></Corner>
                {columns.map((c) => <ColumnHead key={c} scope="col" $selected={c === 'A'}>{c}</ColumnHead>)}
              </tr>
            </thead>
            <tbody>
              {rows.map((r) => (
                <tr key={r}>
                  <RowHead scope="row" $selected={r === 1}>{r}</RowHead>
                  {columns.map((c) => <Cell key={c} $selected={r === 1 && c === 'A'} />)}
                </tr>
              ))}
            </tbody>
          </Grid>
        </Viewport>
        <Gutter />
        <ScrollBar>
          <ScrollButton aria-label="Помери нагоре"><svg width="9" height="5"><path d="M0 5h9L4.500 0z" fill="#666" /></svg></ScrollButton>
          <ScrollThumb />
        </ScrollBar>
      </SheetArea>
    </Window>
  );
}

const EditingTools = styled.div`
  margin-left: 7px;
`;
